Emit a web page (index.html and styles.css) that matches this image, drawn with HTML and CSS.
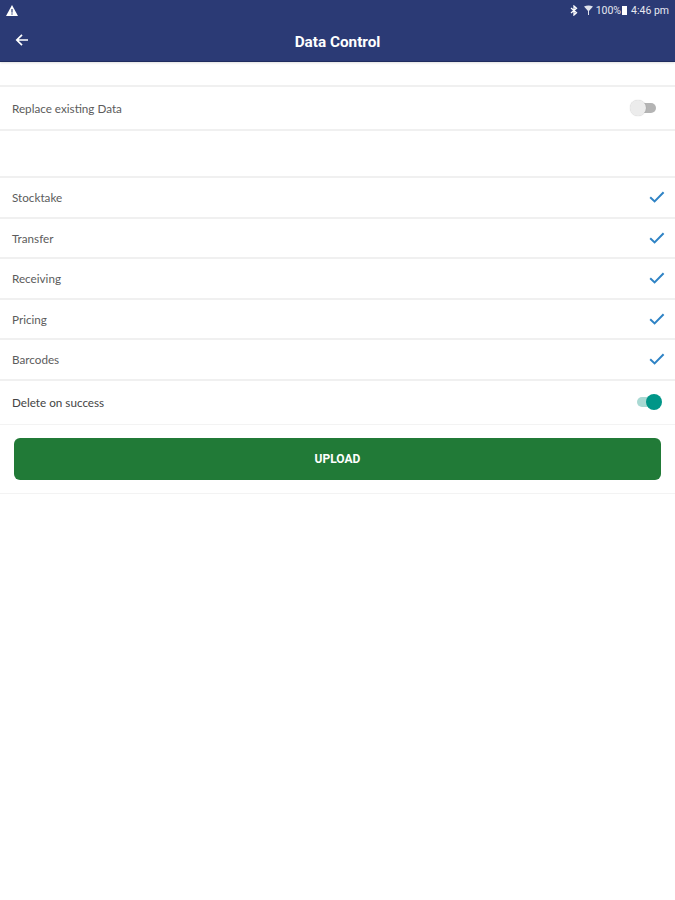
FILE: index.html
```html
<!DOCTYPE html>
<html lang="en">
<head>
    <meta charset="UTF-8">
    <meta name="viewport" content="width=device-width, initial-scale=1.0">
    <title>Data Control</title>
    <link rel="stylesheet" href="styles.css">
</head>
<body>

    <!-- Status bar + title bar -->
    <header class="app-header">
        <div class="status-bar">
            <svg class="icon-warning" width="12" height="11" viewBox="0 0 12 11">
                <path d="M6 0 L12 11 L0 11 Z" fill="#fff"/>
                <rect x="5.4" y="4" width="1.2" height="3.6" fill="#2b3a75"/>
                <rect x="5.4" y="8.4" width="1.2" height="1.2" fill="#2b3a75"/>
            </svg>
            <div class="status-right">
                <svg width="8" height="11" viewBox="0 0 8 11">
                    <path d="M1 3 L6.5 7.8 L4 10 L4 1 L6.5 3.2 L1 8" fill="none" stroke="#fff" stroke-width="1.3"/>
                </svg>
                <svg class="icon-wifi" width="9" height="11" viewBox="0 0 9 11">
                    <path d="M0 1.5 Q4.5 -0.5 9 1.5 L5 6 L5 10 L4 10 L4 6 Z" fill="#dfe2ec"/>
                </svg>
                <span class="status-text">100%</span>
                <span class="battery"></span>
                <span class="status-text">4:46 pm</span>
            </div>
        </div>
        <div class="title-bar">
            <svg class="icon-back" width="14" height="14" viewBox="0 0 14 14">
                <path d="M13 7 H2 M7 1.8 L1.8 7 L7 12.2" fill="none" stroke="#fff" stroke-width="1.7"/>
            </svg>
            <h1>Data Control</h1>
        </div>
    </header>

    <main>
        <div class="row row-replace">
            <span class="label">Replace existing Data</span>
            <span class="switch switch-off"><span class="knob"></span></span>
        </div>

        <div class="check-list">
            <div class="row row-check">
                <span class="label">Stocktake</span>
                <svg class="tick" width="16" height="12" viewBox="0 0 16 12"><path d="M1.2 6.2 L5.6 10.4 L14.6 1.2" fill="none" stroke="#2f83c5" stroke-width="2"/></svg>
            </div>
            <div class="row row-check">
                <span class="label">Transfer</span>
                <svg class="tick" width="16" height="12" viewBox="0 0 16 12"><path d="M1.2 6.2 L5.6 10.4 L14.6 1.2" fill="none" stroke="#2f83c5" stroke-width="2"/></svg>
            </div>
            <div class="row row-check">
                <span class="label">Receiving</span>
                <svg class="tick" width="16" height="12" viewBox="0 0 16 12"><path d="M1.2 6.2 L5.6 10.4 L14.6 1.2" fill="none" stroke="#2f83c5" stroke-width="2"/></svg>
            </div>
            <div class="row row-check">
                <span class="label">Pricing</span>
                <svg class="tick" width="16" height="12" viewBox="0 0 16 12"><path d="M1.2 6.2 L5.6 10.4 L14.6 1.2" fill="none" stroke="#2f83c5" stroke-width="2"/></svg>
            </div>
            <div class="row row-check">
                <span class="label">Barcodes</span>
                <svg class="tick" width="16" height="12" viewBox="0 0 16 12"><path d="M1.2 6.2 L5.6 10.4 L14.6 1.2" fill="none" stroke="#2f83c5" stroke-width="2"/></svg>
            </div>
        </div>

        <div class="row row-delete">
            <span class="label label-dark">Delete on success</span>
            <span class="switch switch-on"><span class="knob"></span></span>
        </div>

        <div class="upload-wrap">
            <button class="upload-button">UPLOAD</button>
        </div>
    </main>

</body>
</html>
```

FILE: styles.css
```css
body, html {
    margin: 0;
    padding: 0;
    width: 100%;
    height: 100%;
    background: #ffffff;
    font-family: Lato, Arial, sans-serif;
}

/* Header */
.app-header {
    height: 62px;
    box-sizing: border-box;
    background: #2b3a75;
    border-bottom: 1px solid #1f2c5e;
    box-shadow: 0 1px 2px rgba(0, 0, 0, 0.12);
    color: #ffffff;
}

.status-bar {
    display: flex;
    justify-content: space-between;
    align-items: center;
    height: 21px;
    padding: 0 6px;
}

.status-right {
    display: flex;
    align-items: center;
    gap: 3px;
}

.icon-wifi {
    margin-left: 3px;
}

.status-text {
    font-size: 10.5px;
    color: #e6e8f0;
    font-family: Roboto, Arial, sans-serif;
}

.battery {
    width: 5px;
    height: 9px;
    margin: 0 1px 0 -2px;
    background: #ffffff;
}

.title-bar {
    position: relative;
    display: flex;
    justify-content: center;
    align-items: center;
    height: 40px;
    padding-top: 1px;
    box-sizing: border-box;
}

.title-bar h1 {
    margin: 0;
    font-size: 15.3px;
    font-weight: bold;
    font-family: Roboto, Arial, sans-serif;
}

.icon-back {
    position: absolute;
    left: 15px;
    top: 12px;
}

/* Rows */
main {
    padding-top: 23px;
}

.row {
    display: flex;
    justify-content: space-between;
    align-items: center;
    box-sizing: border-box;
    padding: 0 12px;
    border-top: 2px solid #f0f0f0;
}

.label {
    font-size: 11.7px;
    color: #5c5c5c;
}

.label-dark {
    color: #444444;
}

.row-replace {
    height: 46px;
    border-bottom: 2px solid #f0f0f0;
}

.check-list {
    margin-top: 45px;
}

.row-check {
    height: 40.5px;
    padding-right: 10px;
}

.row-delete {
    height: 46px;
    padding-right: 18px;
    border-bottom: 1px solid #f3f3f3;
}

/* Switches */
.switch {
    position: relative;
    display: block;
    width: 20px;
    height: 10px;
    border-radius: 5px;
}

.knob {
    position: absolute;
    top: -3px;
    width: 16px;
    height: 16px;
    border-radius: 50%;
}

.switch-off {
    margin-right: 7px;
    background: #b4b4b4;
}

.switch-off .knob {
    left: -6px;
    background: #ececec;
    box-shadow: 0 0 1px rgba(0, 0, 0, 0.25);
}

.switch-on {
    background: #a9d9d3;
}

.switch-on .knob {
    right: -5px;
    background: #009688;
}

/* Upload */
.upload-wrap {
    padding: 13px 14px;
    border-bottom: 1px solid #f3f3f3;
}

.upload-button {
    display: block;
    width: 100%;
    height: 42px;
    padding: 1px 0 0;
    border: none;
    border-radius: 6px;
    background: #217a37;
    color: #ffffff;
    font-size: 12px;
    font-weight: bold;
    font-family: Roboto, Arial, sans-serif;
}
```
